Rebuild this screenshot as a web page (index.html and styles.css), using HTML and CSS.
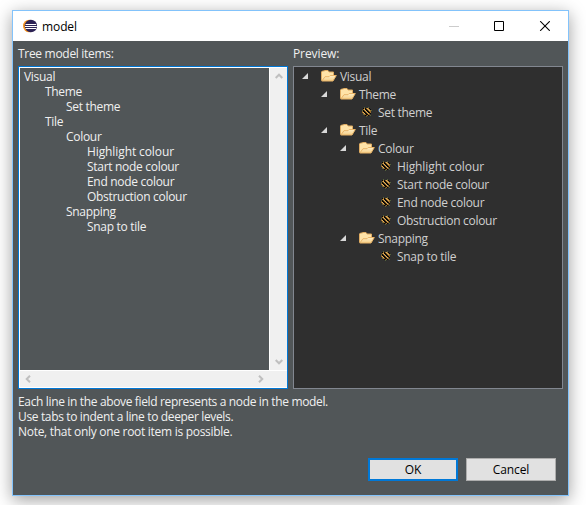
FILE: index.html
```html
<!DOCTYPE html>
<html lang="en">
<head>
<meta charset="utf-8">
<title>model</title>
<link rel="stylesheet" href="styles.css">
</head>
<body>
<svg class="defs" width="0" height="0">
  <defs>
    <linearGradient id="fold" x1="0" y1="0" x2="0" y2="1"><stop offset="0" stop-color="#fff0c8"/><stop offset="1" stop-color="#f5cd85"/></linearGradient>
    <symbol id="folder" viewBox="0 0 16 16">
      <path d="M.5 12.500V4L1.500 3H3L4 2.500H7L8 4H12.500V8" fill="#ffe3a8" stroke="#e0ac62"/>
      <path d="M.8 13L4 8.700H8L9.200 7.500H15.300L12 13Z" fill="url(#fold)" stroke="#e9b468"/>
    </symbol>
    <symbol id="leaf" viewBox="0 0 16 16">
      <path d="M5 4h5v1h1v1h1v4h-1v1h-1v1H7v-1H5v-1H4V9H3V7h1V5h1Z" fill="#9c6d2a"/>
      <path d="M6 4h1v1h1v1h1v1h1v1h1v1h1v1h-1v-.500h-1V9H9V8H8V7H7V6H6ZM4 6h1v1h1v1h1v1h1v1h1v1H8v.500H7V10H6V9H5V8H4Z" fill="#0b0906"/>
      <path d="M8 4h1v1h1v1h1v1h-1V6H9V5H8ZM5 5h1v1h1v1h1v1h1v1h1v1H9V9H8V8H7V7H6V6H5ZM4 8h1v1h1v1H5V9H4Z" fill="#deb160"/>
      <path d="M5 3h1v1H5ZM9 3h1v1H9ZM3 6h1v1H3ZM12 6h1v1h-1ZM4 10h1v1H4ZM11 11h1v1h-1ZM7 12h1v1H7Z" fill="#56633d"/>
      <path d="M4 4h1v1H4ZM10 4h1v1h-1ZM11 5h1v1h-1ZM6 11h1v1H6ZM9 11h1v1H9Z" fill="#080808"/>
    </symbol>
    <symbol id="open" viewBox="0 0 6 6"><path d="M6 0V6H0Z" fill="#d8d8d8"/></symbol>
  </defs>
</svg>
<main class="window">
  <header class="titlebar">
    <svg class="logo" width="14" height="14" viewBox="0 0 14 14"><circle cx="6.300" cy="7" r="6.300" fill="#f7941e"/><circle cx="7.900" cy="7" r="6.200" fill="#2c2255"/><path d="M2.500 5.500H13.200M2 7.500H13.800M2.500 9.500H13.200" stroke="#fff" stroke-width="1"/></svg>
    <span class="title">model</span>
    <svg class="controls" width="101" height="10" viewBox="0 0 101 10" fill="none"><path d="M0 5.500H10" stroke="#ccc"/><path d="M45.500 .5H54.500V9.500H45.500Z" stroke="#000"/><path d="M91.200 .2L100.800 9.800M100.800 .2L91.200 9.800" stroke="#000" stroke-width="1.100"/></svg>
  </header>
  <div class="content">
    <section class="columns">
      <div class="column">
        <label class="caption">Tree model items:</label>
        <div class="editor">
          <pre class="text">Visual
	Theme
		Set theme
	Tile
		Colour
			<span class="wide">Highlight colour</span>
			Start node colour
			End node colour
			Obstruction colour
		Snapping
			Snap to tile</pre>
          <div class="vbar">
            <svg width="8" height="6" viewBox="0 0 8 6"><path d="M.7 5L4 1.700 7.300 5"/></svg>
            <svg width="8" height="6" viewBox="0 0 8 6"><path d="M.7 1L4 4.300 7.300 1"/></svg>
          </div>
          <div class="hbar">
            <svg width="6" height="8" viewBox="0 0 6 8"><path d="M5 .7L1.700 4 5 7.300"/></svg>
            <svg width="6" height="8" viewBox="0 0 6 8"><path d="M1 .7L4.300 4 1 7.300"/></svg>
          </div>
        </div>
      </div>
      <div class="column">
        <label class="caption wide">Preview:</label>
        <div class="tree">
          <div class="row"><svg class="arrow"><use href="#open"/></svg><svg class="icon"><use href="#folder"/></svg>Visual</div>
          <div class="row l1"><svg class="arrow"><use href="#open"/></svg><svg class="icon"><use href="#folder"/></svg>Theme</div>
          <div class="row leaf2"><svg class="icon"><use href="#leaf"/></svg>Set theme</div>
          <div class="row l1"><svg class="arrow"><use href="#open"/></svg><svg class="icon"><use href="#folder"/></svg>Tile</div>
          <div class="row l2"><svg class="arrow"><use href="#open"/></svg><svg class="icon"><use href="#folder"/></svg>Colour</div>
          <div class="row leaf3 wide"><svg class="icon"><use href="#leaf"/></svg>Highlight colour</div>
          <div class="row leaf3"><svg class="icon"><use href="#leaf"/></svg>Start node colour</div>
          <div class="row leaf3"><svg class="icon"><use href="#leaf"/></svg>End node colour</div>
          <div class="row leaf3"><svg class="icon"><use href="#leaf"/></svg>Obstruction colour</div>
          <div class="row l2"><svg class="arrow"><use href="#open"/></svg><svg class="icon"><use href="#folder"/></svg>Snapping</div>
          <div class="row leaf3"><svg class="icon"><use href="#leaf"/></svg>Snap to tile</div>
        </div>
      </div>
    </section>
    <div class="hint">
      <p>Each line in the above field represents a node in the model.</p>
      <p>Use tabs to indent a line to deeper levels.</p>
      <p class="loose">Note, that only one root item is possible.</p>
    </div>
    <footer class="actions"><button class="ok">OK</button><button>Cancel</button></footer>
  </div>
</main>
</body>
</html>
```
FILE: styles.css
```css
* { box-sizing: border-box; }
body { margin: 0; width: 586px; height: 505px; padding: 10px 0 0 12px; overflow: hidden; background: #fff; font: 12px/15px "Open Sans", "Noto Sans", sans-serif; letter-spacing: -0.3px; }
.defs { position: absolute; }
.window { width: 557px; height: 486px; border: 1px solid #83c3fb; background: #515658; box-shadow: 0 4px 16px rgba(0,0,0,.38); display: flex; flex-direction: column; }
.titlebar { height: 30px; flex: none; background: #fff; display: flex; align-items: center; padding: 0 18px 0 10px; color: #000; letter-spacing: -0.1px; }
.logo { margin-right: 5px; }
.title { flex: 1; }
.content { padding: 5px 5px 0; flex: 1; display: flex; flex-direction: column; color: #f0f0f0; }
.columns { display: flex; gap: 5px; }
.column { width: 270px; }
.caption { display: block; height: 20px; }
.editor { height: 323px; border: 1px solid #0078d7; padding: 1px; background: #fff; display: grid; grid-template-columns: 249px 17px; grid-template-rows: 302px 16px; gap: 1px; }
.text { margin: 0; padding: 1px 0 0 4px; background: #515658; font: inherit; tab-size: 21px; }
.wide { letter-spacing: -0.1px; }
.vbar, .hbar { background: #f0f0f0; display: flex; justify-content: space-between; align-items: center; }
.vbar { flex-direction: column; padding: 5px 0; }
.hbar { grid-column: 1 / 3; padding: 0 23px 0 5px; }
.vbar svg, .hbar svg { fill: none; stroke: #bfbfbf; stroke-width: 2; }
.tree { height: 323px; border: 1px solid #828790; background: #2f2f2f; color: #d0d0d0; padding-left: 8px; }
.row { height: 18px; display: flex; align-items: center; }
.l1 { padding-left: 19px; }
.l2 { padding-left: 38px; }
.leaf2 { padding-left: 57px; }
.leaf3 { padding-left: 76px; }
.arrow { width: 6px; height: 6px; margin-right: 13px; }
.icon { width: 16px; height: 16px; margin-right: 3px; }
.hint { margin: 5px 0 0; letter-spacing: -0.35px; }
.hint p { margin: 0; height: 15px; }
.hint .loose { letter-spacing: -0.29px; }
.actions { display: flex; justify-content: flex-end; gap: 8px; margin: 19px 7px 0 0; }
button { width: 90px; height: 23px; padding: 0; border: 1px solid #adadad; background: #e1e1e1; color: #000; font: inherit; letter-spacing: -0.1px; }
.ok { border: 2px solid #0078d7; }
```
